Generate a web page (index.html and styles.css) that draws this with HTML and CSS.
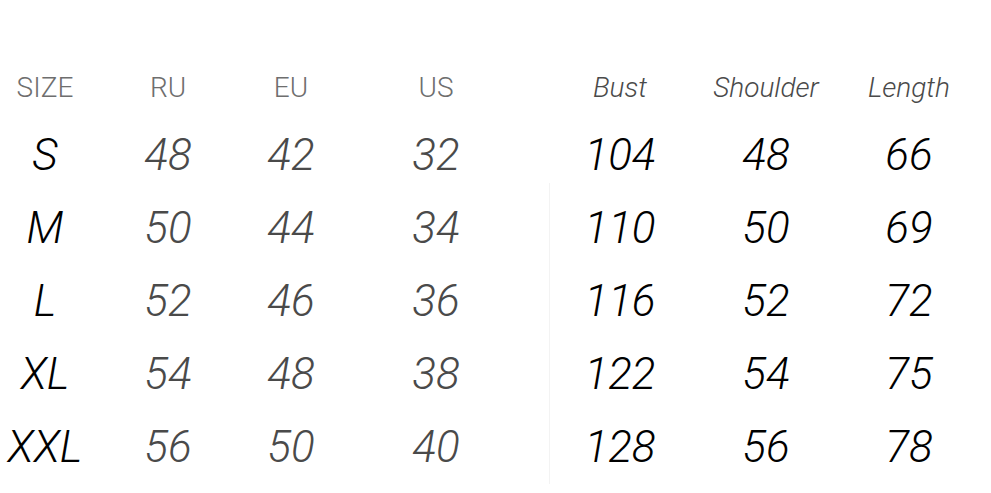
FILE: index.html
```html
<!DOCTYPE html>
<html>
<head>
<meta charset="utf-8">
<link rel="stylesheet" href="styles.css">
</head>
<body>
<div class="chart">
  <div class="row head">
    <div class="c size">SIZE</div>
    <div class="c">RU</div>
    <div class="c">EU</div>
    <div class="c">US</div>
    <div class="c it">Bust</div>
    <div class="c it">Shoulder</div>
    <div class="c it">Length</div>
  </div>
  <div class="body">
    <div class="divider"></div>
    <div class="row data">
      <div class="c s">S</div><div class="c g">48</div><div class="c g">42</div><div class="c g">32</div><div class="c k">104</div><div class="c k">48</div><div class="c k">66</div>
    </div>
    <div class="row data">
      <div class="c s">M</div><div class="c g">50</div><div class="c g">44</div><div class="c g">34</div><div class="c k">110</div><div class="c k">50</div><div class="c k">69</div>
    </div>
    <div class="row data">
      <div class="c s">L</div><div class="c g">52</div><div class="c g">46</div><div class="c g">36</div><div class="c k">116</div><div class="c k">52</div><div class="c k">72</div>
    </div>
    <div class="row data">
      <div class="c s">XL</div><div class="c g">54</div><div class="c g">48</div><div class="c g">38</div><div class="c k">122</div><div class="c k">54</div><div class="c k">75</div>
    </div>
    <div class="row data">
      <div class="c s">XXL</div><div class="c g">56</div><div class="c g">50</div><div class="c g">40</div><div class="c k">128</div><div class="c k">56</div><div class="c k">78</div>
    </div>
  </div>
</div>
</body>
</html>
```
FILE: styles.css
```css
html, body {
  margin: 0;
  padding: 0;
  background: #ffffff;
}
body {
  font-family: Roboto, "Liberation Sans", Arial, sans-serif;
  font-weight: 300;
  width: 991px;
  height: 493px;
  overflow: hidden;
}
.chart {
  padding-top: 68px;
}
.row {
  display: grid;
  grid-template-columns: 90px 156px 90px 200px 168px 124px 162px;
}
.c {
  text-align: center;
  white-space: nowrap;
}
.head {
  font-size: 28px;
  line-height: 40px;
  color: #6e6e6e;
}
.head .it {
  font-style: italic;
  color: #4a4a4a;
}
.body {
  position: relative;
  margin-top: 11px;
}
.divider {
  position: absolute;
  left: 549px;
  top: 64px;
  bottom: 0;
  width: 1px;
  background: #f3f3f3;
}
.data {
  font-size: 44px;
  line-height: 73px;
  font-style: italic;
}
.data .s { color: #000000; }
.data .g { color: #4a4a4a; }
.data .k { color: #000000; }
```
